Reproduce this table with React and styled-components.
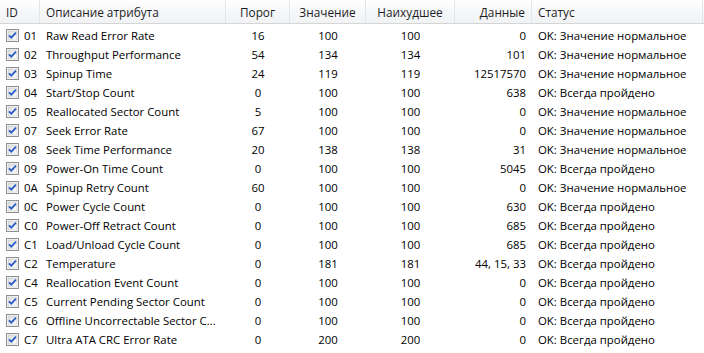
import React from "react";
import styled, { createGlobalStyle } from "styled-components";

const Global = createGlobalStyle`
  body {
    margin: 0;
    background: #fff;
    font-family: "Open Sans", "Noto Sans", sans-serif;
    font-size: 11.4px;
    color: #000;
  }
`;

const cols = "40px 186px 64px 76px 89px 77px 171px 1fr";

const Table = styled.div`
  width: 704px;
  height: 353px;
  overflow: hidden;
  background: #fff;
`;

const Header = styled.div`
  display: grid;
  grid-template-columns: ${cols};
  height: 23px;
  background: linear-gradient(#ffffff, #f6f7f9 50%, #f1f2f4);
  border-bottom: 1px solid #d5d5d5;
  margin-bottom: 2px;
  font-size: 11.8px;
`;

const HeadCell = styled.div`
  display: flex;
  align-items: center;
  justify-content: ${(p) => p.$align || "flex-start"};
  padding: 0 6px;
  border-right: 1px solid #e3e5e8;
  color: #1e1e1e;
  white-space: nowrap;
  overflow: hidden;
`;

const Row = styled.div`
  display: grid;
  grid-template-columns: ${cols};
  height: 19px;
`;

const Cell = styled.div`
  display: flex;
  align-items: center;
  justify-content: ${(p) => p.$align || "flex-start"};
  padding: 0 6px;
  white-space: nowrap;
  overflow: hidden;
  text-overflow: ellipsis;
`;

const IdCell = styled(Cell)`
  padding: 0 0 0 6px;
  gap: 5px;
`;

const Box = styled.svg`
  flex: none;
  width: 13px;
  height: 13px;
  margin-top: -1px;
`;

const Check = () => (
  <Box viewBox="0 0 13 13">
    <defs>
      <linearGradient id="cbg" x1="0" y1="0" x2="1" y2="1">
        <stop offset="0" stopColor="#dcdcdc" />
        <stop offset="1" stopColor="#ffffff" />
      </linearGradient>
    </defs>
    <rect x="0.5" y="0.5" width="12" height="12" fill="#fff" stroke="#8e8f8f" />
    <rect x="2" y="2" width="9" height="9" fill="url(#cbg)" stroke="#c0c5cc" strokeWidth="0.6" />
    <path d="M3 6.3 L5.3 8.7 L10 3.6" fill="none" stroke="#2a5bc6" strokeWidth="1.8" />
  </Box>
);

const data = [
  ["01", "Raw Read Error Rate", 16, 100, 100, "0", "OK: Значение нормальное"],
  ["02", "Throughput Performance", 54, 134, 134, "101", "OK: Значение нормальное"],
  ["03", "Spinup Time", 24, 119, 119, "12517570", "OK: Значение нормальное"],
  ["04", "Start/Stop Count", 0, 100, 100, "638", "OK: Всегда пройдено"],
  ["05", "Reallocated Sector Count", 5, 100, 100, "0", "OK: Значение нормальное"],
  ["07", "Seek Error Rate", 67, 100, 100, "0", "OK: Значение нормальное"],
  ["08", "Seek Time Performance", 20, 138, 138, "31", "OK: Значение нормальное"],
  ["09", "Power-On Time Count", 0, 100, 100, "5045", "OK: Всегда пройдено"],
  ["0A", "Spinup Retry Count", 60, 100, 100, "0", "OK: Значение нормальное"],
  ["0C", "Power Cycle Count", 0, 100, 100, "630", "OK: Всегда пройдено"],
  ["C0", "Power-Off Retract Count", 0, 100, 100, "685", "OK: Всегда пройдено"],
  ["C1", "Load/Unload Cycle Count", 0, 100, 100, "685", "OK: Всегда пройдено"],
  ["C2", "Temperature", 0, 181, 181, "44, 15, 33", "OK: Всегда пройдено"],
  ["C4", "Reallocation Event Count", 0, 100, 100, "0", "OK: Всегда пройдено"],
  ["C5", "Current Pending Sector Count", 0, 100, 100, "0", "OK: Всегда пройдено"],
  ["C6", "Offline Uncorrectable Sector C...", 0, 100, 100, "0", "OK: Всегда пройдено"],
  ["C7", "Ultra ATA CRC Error Rate", 0, 200, 200, "0", "OK: Всегда пройдено"],
];

export default function App() {
  return (
    <Table>
      <Global />
      <Header>
        <HeadCell>ID</HeadCell>
        <HeadCell>Описание атрибута</HeadCell>
        <HeadCell $align="center">Порог</HeadCell>
        <HeadCell $align="center">Значение</HeadCell>
        <HeadCell $align="center">Наихудшее</HeadCell>
        <HeadCell $align="flex-end">Данные</HeadCell>
        <HeadCell>Статус</HeadCell>
        <HeadCell />
      </Header>
      {data.map(([id, name, thr, val, worst, raw, status]) => (
        <Row key={id}>
          <IdCell>
            <Check />
            {id}
          </IdCell>
          <Cell>{name}</Cell>
          <Cell $align="center">{thr}</Cell>
          <Cell $align="center">{val}</Cell>
          <Cell $align="center">{worst}</Cell>
          <Cell $align="flex-end">{raw}</Cell>
          <Cell>{status}</Cell>
          <Cell />
        </Row>
      ))}
    </Table>
  );
}
